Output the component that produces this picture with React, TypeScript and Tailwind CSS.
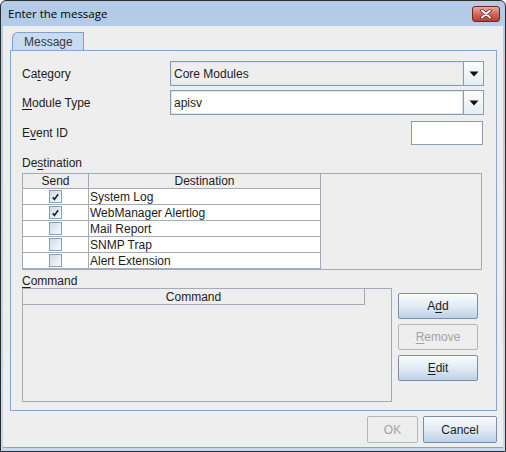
import clsx from 'clsx'

// ─── Helpers ─────────────────────────────────────────────────────────────────

function U({ children }: { children: string }) {
  return <span className="underline underline-offset-[2px] decoration-[1px]">{children}</span>
}

function Button({
  children,
  disabled,
  className,
}: {
  children: React.ReactNode
  disabled?: boolean
  className?: string
}) {
  return (
    <div
      className={clsx(
        'flex items-center justify-center border rounded-[2px]',
        disabled
          ? 'border-[#b6b6b6] bg-[#eeeeee] text-[#a2a2a2]'
          : 'border-[#7c8ea7] bg-linear-to-b from-[#f9fbfd] via-[#e2ebf5] to-[#bdd1e8] text-[#1c1c1c]',
        className,
      )}
    >
      {children}
    </div>
  )
}

function Combo({ value, editable }: { value: string; editable?: boolean }) {
  return (
    <div className="flex h-[25px] w-[314px] border border-[#8a9cb2]">
      <div
        className={clsx(
          'flex-1 flex items-center pl-[2px] border border-[#dfe5ec]',
          editable ? 'bg-white' : 'bg-[#eeeeee]',
        )}
      >
        {value}
      </div>
      <div className="w-[20px] flex items-center justify-center border-l border-[#8a9cb2] bg-linear-to-b from-[#fbfcfd] to-[#e6ecf3]">
        <svg width="10" height="6" viewBox="0 0 10 6">
          <path d="M0.5 0.5 H9.5 L5 5.5 Z" fill="#111" />
        </svg>
      </div>
    </div>
  )
}

function Check({ checked }: { checked: boolean }) {
  return (
    <div className="w-[13px] h-[13px] border border-[#8e9db2] bg-linear-to-br from-[#cfdae6] to-[#f8fafc] flex items-center justify-center">
      {checked && (
        <svg width="9" height="9" viewBox="0 0 9 9">
          <path d="M1.8 5.2 L3.4 7.4 L7.2 2.2" stroke="#1a2230" strokeWidth="1.6" fill="none" />
        </svg>
      )}
    </div>
  )
}

const destinos = [
  { nombre: 'System Log', on: true },
  { nombre: 'WebManager Alertlog', on: true },
  { nombre: 'Mail Report', on: false },
  { nombre: 'SNMP Trap', on: false },
  { nombre: 'Alert Extension', on: false },
]

// ─── Vista principal ──────────────────────────────────────────────────────────

export default function App() {
  return (
    <div className="w-[506px] h-[452px] bg-white font-['Liberation_Sans',Arial,sans-serif] text-[12px] leading-none text-[#1c1c1c]">
      <div className="w-[506px] h-[452px] border border-[#2c2c2c] rounded-t-[6px] bg-linear-to-b from-[#b3cbe7] to-[#c6d9ee] flex flex-col overflow-hidden">
        {/* Barra de título */}
        <div className="h-[25px] flex items-center justify-between pl-[7px] pr-[5px]">
          <span className="font-['Open_Sans','Noto_Sans',sans-serif] text-[11.5px] text-black">Enter the message</span>
          <div className="w-[28px] h-[16px] mt-[1px] rounded-[3px] border border-[#6a2a24] bg-linear-to-b from-[#e9aaa2] via-[#d06a5e] to-[#b93b2f] flex items-center justify-center">
            <svg width="12" height="10" viewBox="0 0 12 10">
              <path d="M2 1.5 L10 8.5 M10 1.5 L2 8.5" stroke="#5b2320" strokeWidth="3.4" strokeLinecap="round" />
              <path d="M2 1.5 L10 8.5 M10 1.5 L2 8.5" stroke="#ffffff" strokeWidth="1.9" strokeLinecap="round" />
            </svg>
          </div>
        </div>

        {/* Contenido */}
        <div className="flex-1 mx-[2px] mb-[3px] bg-[#eeeeee] border-b border-[#5cb3df] flex flex-col pl-[7px] pr-[5px] pt-[6px]">
          {/* Pestaña */}
          <div className="flex">
            <div className="w-[72px] h-[18px] ml-[2px] rounded-tl-[6px] border-t border-l border-r border-[#7f9fd0] bg-[#c8dbf1] flex items-center pl-[11px] text-[#3a3a3a]">
              Message
            </div>
          </div>

          {/* Panel */}
          <div className="w-[487px] h-[361px] border border-[#8aa7d3] flex flex-col pl-[11px] pr-[12px] pt-[10px]">
            <div className="flex items-center h-[25px]">
              <span className="w-[148px]">Ca<U>t</U>egory</span>
              <Combo value="Core Modules" />
            </div>
            <div className="flex items-center h-[25px] mt-[4px]">
              <span className="w-[148px]"><U>M</U>odule Type</span>
              <Combo value="apisv" editable />
            </div>
            <div className="flex items-center justify-between h-[24px] mt-[6px]">
              <span>E<U>v</U>ent ID</span>
              <div className="w-[72px] h-[24px] border border-[#8a9cb2] bg-white mr-[1px]" />
            </div>

            <div className="h-[14px] mt-[11px] flex items-center">
              De<U>s</U>tination
            </div>

            {/* Tabla destinos */}
            <div className="mt-[3px] w-[460px] h-[97px] border border-[#a3abb6] flex">
              <div className="w-[298px] flex flex-col">
                <div className="flex h-[15px] border-b border-[#a3abb6]">
                  <div className="w-[66px] border-r border-[#a3abb6] flex items-center justify-center">Send</div>
                  <div className="w-[232px] border-r border-[#a3abb6] flex items-center justify-center">Destination</div>
                </div>
                {destinos.map(d => (
                  <div key={d.nombre} className="flex h-[16px] border-b border-[#a3abb6] bg-white">
                    <div className="w-[66px] border-r border-[#a3abb6] flex items-center justify-center">
                      <Check checked={d.on} />
                    </div>
                    <div className="w-[232px] border-r border-[#a3abb6] flex items-center pl-[1px]">{d.nombre}</div>
                  </div>
                ))}
              </div>
            </div>

            <div className="h-[14px] mt-[4px] flex items-center">
              <U>C</U>ommand
            </div>

            {/* Comandos */}
            <div className="flex">
              <div className="w-[370px] h-[114px] border border-[#a3abb6] flex flex-col">
                <div className="w-[342px] h-[16px] border-r border-b border-[#a3abb6] flex items-center justify-center">
                  Command
                </div>
              </div>
              <div className="ml-[6px] pt-[5px] flex flex-col gap-[5px]">
                <Button className="w-[80px] h-[26px]">A<U>d</U>d</Button>
                <Button className="w-[80px] h-[26px]" disabled><U>R</U>emove</Button>
                <Button className="w-[80px] h-[26px]"><U>E</U>dit</Button>
              </div>
            </div>
          </div>

          {/* Botones inferiores */}
          <div className="flex justify-end gap-[5px] mt-[5px] w-[487px]">
            <Button className="w-[51px] h-[27px]" disabled>OK</Button>
            <Button className="w-[74px] h-[27px]">Cancel</Button>
          </div>
        </div>
      </div>
    </div>
  )
}
